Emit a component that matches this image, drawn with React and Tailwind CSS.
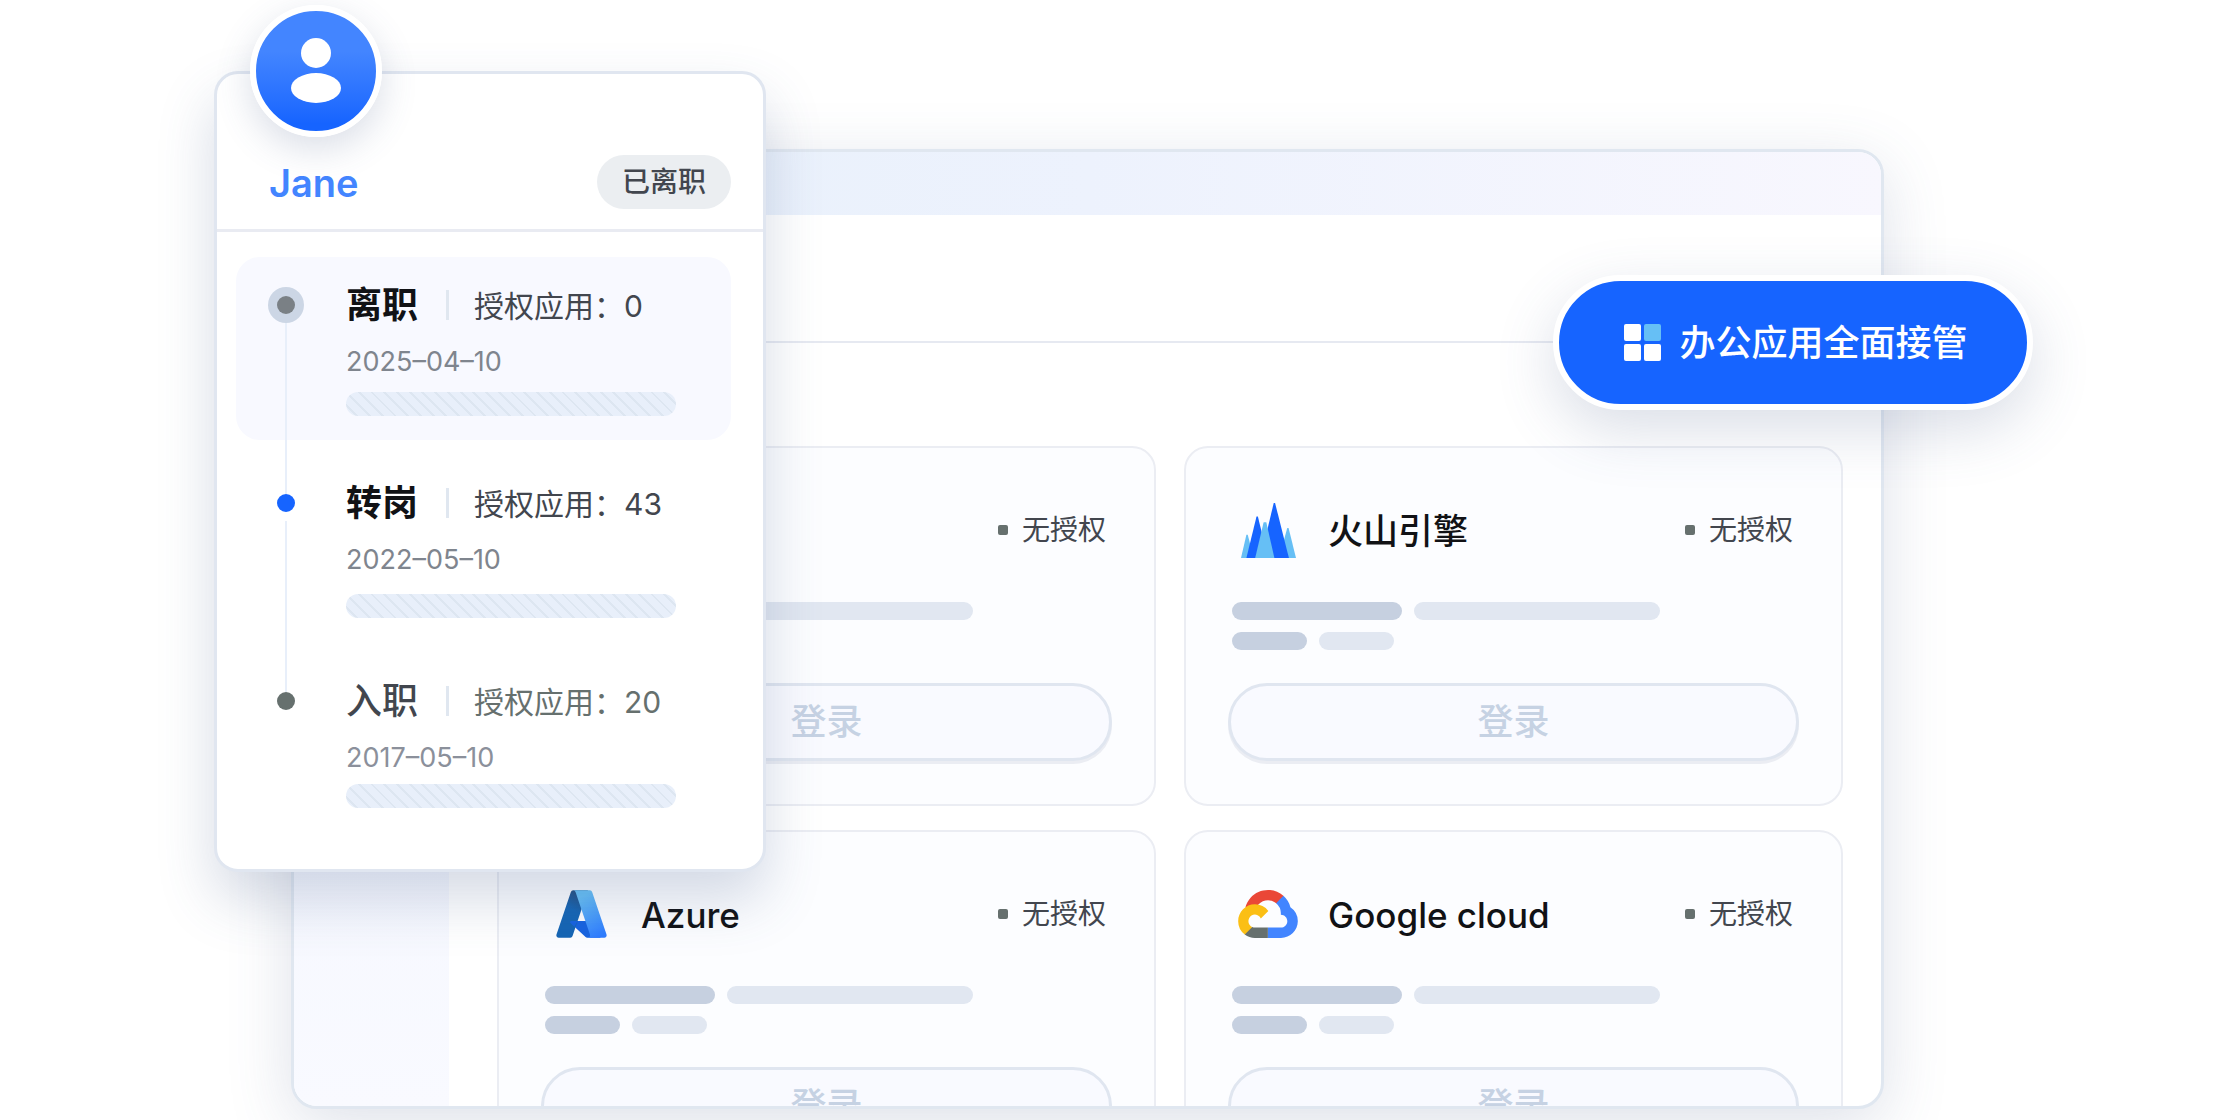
const APPS = [
    { id: "first", name: "", Logo: null },
    { id: "volcengine", name: "火山引擎", Logo: VolcengineLogo },
    { id: "azure", name: "Azure", Logo: AzureLogo },
    { id: "google-cloud", name: "Google cloud", Logo: GoogleCloudLogo }
];

const EVENTS = [
    {
        title: "离职",
        count: 0,
        date: "2025–04–10",
        row: "bg-[#f8f9ff]",
        dot: "bg-[#7a8085] ring-9 ring-[#ccd6e5]",
        titleColor: "font-semibold text-[#111215]",
        countColor: "text-[#42464e]",
        dateColor: "text-[#7f858e]",
        barGap: "mt-3"
    },
    {
        title: "转岗",
        count: 43,
        date: "2022–05–10",
        row: "",
        dot: "bg-[#1664ff]",
        titleColor: "font-semibold text-[#111215]",
        countColor: "text-[#42464e]",
        dateColor: "text-[#7f858e]",
        barGap: "mt-4"
    },
    {
        title: "入职",
        count: 20,
        date: "2017–05–10",
        row: "",
        dot: "bg-[#66706e]",
        titleColor: "font-medium text-[#42464e]",
        countColor: "text-[#66706e]",
        dateColor: "text-[#8b909b]",
        barGap: "mt-2"
    }
];

function VolcengineLogo() {
    return (
        <svg viewBox="0 0 163 163" className="mx-auto h-[55px] w-[55px]" aria-hidden="true">
            <path fill="#66bff5" d="M16 94h4l18 69H0z" />
            <path fill="#66bff5" d="M137 74h4l22 89h-50z" />
            <path fill="#1664ff" d="M46 40h4l30 123H16z" />
            <path fill="#1664ff" d="M97 0h4l41 163H58z" />
            <path fill="#66bff5" d="M67 57h8l24 106H42z" />
        </svg>
    );
}

function AzureLogo() {
    return (
        <svg viewBox="4 6 88 84" className="mx-auto h-12 w-[51px]" aria-hidden="true">
            <defs>
                <linearGradient id="azure-left" x1="0.6" y1="0" x2="0.3" y2="1">
                    <stop offset="0" stopColor="#244f80" />
                    <stop offset="0.4" stopColor="#1565b4" />
                    <stop offset="1" stopColor="#1565b4" />
                </linearGradient>
                <linearGradient id="azure-right" x1="0.3" y1="0" x2="0.7" y2="1">
                    <stop offset="0.1" stopColor="#66bff5" />
                    <stop offset="1" stopColor="#2f7dff" />
                </linearGradient>
            </defs>
            <path
                fill="#1763e0"
                d="M71.175 60.261h-41.29a1.911 1.911 0 0 0-1.305 3.309l26.532 24.764a4.171 4.171 0 0 0 2.846 1.121h23.38z"
            />
            <path
                fill="url(#azure-left)"
                d="M33.338 6.544h26.038l-27.03 80.087a4.152 4.152 0 0 1-3.933 2.824H8.149a4.145 4.145 0 0 1-3.928-5.47L29.404 9.368a4.152 4.152 0 0 1 3.934-2.825z"
            />
            <path fill="#1763e0" d="M41.2 60.261H29.885a1.911 1.911 0 0 0-1.305 3.309l7.1 6.6z" />
            <path
                fill="url(#azure-right)"
                d="M66.595 9.364a4.145 4.145 0 0 0-3.928-2.82H33.648a4.146 4.146 0 0 1 3.928 2.82l25.184 74.62a4.146 4.146 0 0 1-3.928 5.472h29.02a4.146 4.146 0 0 0 3.927-5.472z"
            />
        </svg>
    );
}

function GoogleCloudLogo() {
    return (
        <svg viewBox="0 0 256 206" className="mx-auto h-12 w-[60px]" aria-hidden="true">
            <path
                fill="#ea4737"
                d="M170.252 56.819l22.253-22.253 1.483-9.37C153.437-11.677 88.976-7.496 52.42 33.92 42.267 45.423 34.734 59.764 30.717 74.573l7.97-1.123 44.505-7.34 3.436-3.513c19.797-21.742 53.27-24.667 76.128-6.168l7.496.39z"
            />
            <path
                fill="#4285ff"
                d="M224.205 73.918a100.249 100.249 0 0 0-30.217-48.722l-31.232 31.232a55.515 55.515 0 0 1 20.379 44.037v5.544c15.35 0 27.797 12.445 27.797 27.796 0 15.352-12.446 27.485-27.797 27.485h-55.671v44.505h55.67c39.93.311 72.553-31.494 72.864-71.424a72.303 72.303 0 0 0-31.793-60.453"
            />
            <path
                fill="#66706e"
                d="M71.87 205.796h55.593V161.29H71.87a27.275 27.275 0 0 1-11.4-2.498l-7.887 2.42-22.409 22.253-1.952 7.574c12.567 9.489 27.9 14.825 43.647 14.757"
            />
            <path
                fill="#fbbf15"
                d="M71.87 61.425C31.94 61.664-.237 94.228.001 134.158a72.301 72.301 0 0 0 28.222 56.88l32.248-32.246c-13.99-6.322-20.208-22.786-13.887-36.776 6.32-13.99 22.786-20.208 36.775-13.888a27.796 27.796 0 0 1 13.887 13.888l32.248-32.248A72.224 72.224 0 0 0 71.87 61.425"
            />
        </svg>
    );
}

function AppCard({ name, Logo }) {
    return (
        <article className="h-[360px] rounded-3xl border-2 border-[#ebedf3] bg-[#fcfdff] px-[42px] pt-[50px]">
            <div className="flex h-16 items-center pl-2">
                <div className="w-16">{Logo ? <Logo /> : null}</div>
                <h3 className="ml-7 pt-0.5 text-[35px] font-medium text-[#111215]">{name}</h3>
                <p className="ml-auto flex items-center gap-3.5 pr-1.5 text-[28px] leading-8 text-[#42464e]">
                    <span className="size-2.5 rounded-xs bg-[#66706e]" />
                    无授权
                </p>
            </div>

            <div className="mt-10 space-y-3 pl-1">
                <div className="flex gap-3">
                    <span className="h-[18px] w-[170px] rounded-full bg-[#c6d0e0]" />
                    <span className="h-[18px] w-[246px] rounded-full bg-[#e1e7f1]" />
                </div>
                <div className="flex gap-3">
                    <span className="h-[18px] w-[75px] rounded-full bg-[#c6d0e0]" />
                    <span className="h-[18px] w-[75px] rounded-full bg-[#e1e7f1]" />
                </div>
            </div>

            <button
                type="button"
                className="mt-[33px] h-[78px] w-full rounded-full border-3 border-[#e0e6f0] bg-[#f9faff] text-4xl font-medium text-[#c6d2e3] shadow-[0_3px_0_#ebedf3]"
            >
                登录
            </button>
        </article>
    );
}

function AppWindow() {
    return (
        <main className="mr-[356px] ml-[291px] flex min-h-0 flex-1 flex-col overflow-hidden rounded-[26px] border-3 border-[#e0e7f0] bg-white shadow-[0_16px_64px_rgba(70,90,135,0.18)]">
            <div className="h-[63px] shrink-0 bg-linear-to-r from-[#e6f0fa] via-[#edf2fd] to-[#f8f7fe]" />
            <div className="flex min-h-0 flex-1">
                <aside className="w-[155px] shrink-0 bg-linear-to-b from-[#eef3fe] to-[#f9faff]" />
                <div className="min-w-0 flex-1">
                    <div className="h-32 border-b-2 border-[#e6e9f1]" />
                    <div className="mt-[103px] mr-[38px] ml-12 grid grid-cols-2 gap-x-7 gap-y-6">
                        {APPS.map((app) => (
                            <AppCard key={app.id} name={app.name} Logo={app.Logo} />
                        ))}
                    </div>
                </div>
            </div>
        </main>
    );
}

function Avatar() {
    return (
        <div className="absolute -top-[69px] left-[33px] size-[132px] rounded-full border-6 border-white bg-linear-to-b from-[#4385ff] from-35% to-[#1664ff] to-90% bg-origin-border shadow-[0_12px_36px_rgba(70,90,135,0.2)]">
            <svg viewBox="0 0 120 120" className="size-full" aria-hidden="true">
                <circle cx="60" cy="42" r="15" fill="#fff" />
                <ellipse cx="60" cy="77" rx="25" ry="15" fill="#fff" />
            </svg>
        </div>
    );
}

function TimelineItem({ event, last }) {
    return (
        <li className={`relative flex h-[183px] rounded-3xl pl-[41px] ${event.row}`}>
            {last ? null : <span className="absolute top-[66px] left-[49px] h-[171px] w-0.5 bg-[#e8effa]" />}
            <span className={`mt-[39px] size-[18px] shrink-0 rounded-full ${event.dot}`} />
            <div className="ml-[51px] pt-[26px]">
                <div className="flex h-11 items-center">
                    <h3 className={`text-4xl ${event.titleColor}`}>{event.title}</h3>
                    <span className="ml-7 h-[30px] w-[3px] bg-[#e0e7f0]" />
                    <p className={`ml-[25px] pt-0.5 text-[30px] ${event.countColor}`}>授权应用：{event.count}</p>
                </div>
                <time className={`mt-[17px] block text-[27px] leading-9 ${event.dateColor}`}>{event.date}</time>
                <div
                    className={`h-6 w-[330px] rounded-full bg-[repeating-linear-gradient(45deg,#e8effa_0px,#e8effa_7px,#dde6f1_7px,#dde6f1_9px)] ${event.barGap}`}
                />
            </div>
        </li>
    );
}

function UserCard() {
    return (
        <section className="absolute top-[71px] left-[214px] h-[801px] w-[552px] rounded-3xl border-3 border-[#e0e6f0] bg-white shadow-[0_28px_56px_rgba(70,90,135,0.22)]">
            <Avatar />
            <header className="flex h-[158px] items-end justify-between border-b-3 border-[#e9ebf2] pr-8 pb-5 pl-[52px]">
                <h2 className="text-[38px] leading-[52px] font-semibold text-[#4385ff]">Jane</h2>
                <span className="flex h-[54px] w-[134px] items-center justify-center rounded-full bg-[#ebeef1] text-[28px] font-medium text-[#42464e]">
                    已离职
                </span>
            </header>
            <ol className="mt-[25px] mr-8 ml-[19px] space-y-[15px]">
                {EVENTS.map((event, index) => (
                    <TimelineItem key={event.title} event={event} last={index === EVENTS.length - 1} />
                ))}
            </ol>
        </section>
    );
}

function TakeoverButton() {
    return (
        <button
            type="button"
            className="absolute top-[275px] right-[207px] flex h-[135px] w-[480px] items-center justify-center gap-[18px] rounded-full border-6 border-white bg-[#1664ff] pl-1.5 text-4xl font-medium text-white shadow-[0_20px_60px_rgba(70,90,135,0.2)]"
        >
            <span className="grid grid-cols-2 gap-[3px]">
                <span className="size-[17px] rounded-xs bg-white" />
                <span className="size-[17px] rounded-xs bg-[#66bff5]" />
                <span className="size-[17px] rounded-xs bg-white" />
                <span className="size-[17px] rounded-xs bg-white" />
            </span>
            办公应用全面接管
        </button>
    );
}

export default function App() {
    return (
        <div
            lang="zh-CN"
            className="relative flex h-screen flex-col overflow-hidden bg-white pt-[149px] pb-[11px] font-['Inter','Noto_Sans_CJK_SC',sans-serif]"
        >
            <AppWindow />
            <UserCard />
            <TakeoverButton />
        </div>
    );
}
